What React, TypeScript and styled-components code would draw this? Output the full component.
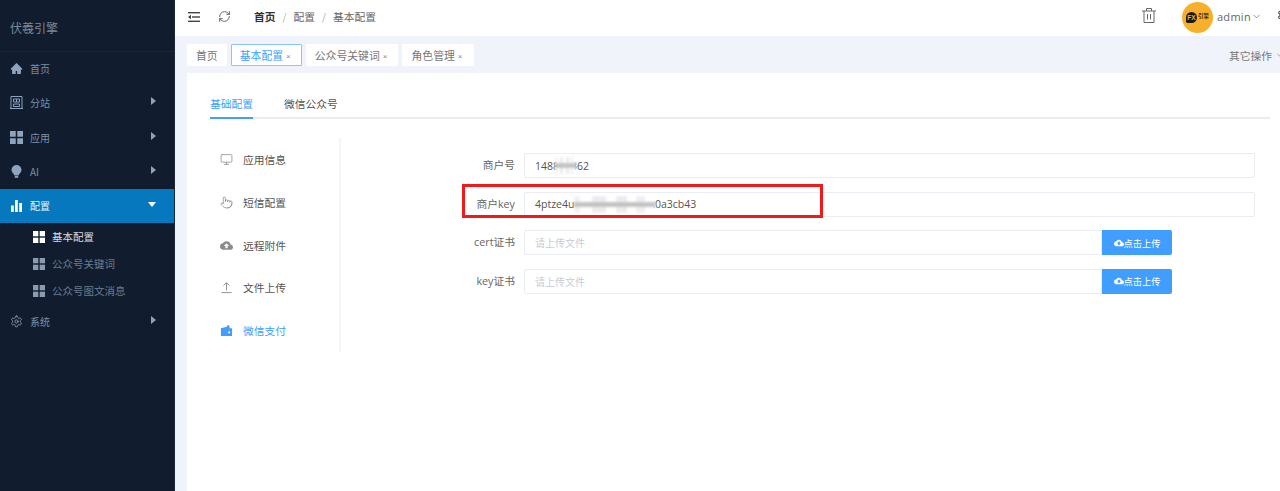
import React from "react";
import styled, { createGlobalStyle } from "styled-components";
import { AiFillHome } from "react-icons/ai";
import { MdCloudUpload } from "react-icons/md";
import { LuMonitor, LuChevronDown, LuSettings, LuRefreshCw, LuPointer } from "react-icons/lu";

const Global = createGlobalStyle`
  html, body { margin: 0; padding: 0; height: 491px; overflow: hidden; background: #fff; }
  body { font-family: "Noto Sans CJK SC", "Noto Sans", sans-serif; }
  * { box-sizing: border-box; }
`;

const Page = styled.div`display: flex; width: 1280px; height: 491px; overflow: hidden;`;
const Sidebar = styled.aside`width: 175px; flex: none; background: #111d2e; border-right: 1px solid #1a2738; color: #8296ad;`;
const Brand = styled.div`height: 52px; display: flex; align-items: center; padding: 3px 0 0 10px; font-size: 12px; color: #7a8a9c; border-bottom: 1px solid #1a2738;`;
const NavItem = styled.div<{ $active?: boolean }>`
  height: 34.3px; display: flex; align-items: center; padding: 0 0 1px 10px; gap: 7px; font-size: 10px; position: relative;
  background: ${p => (p.$active ? "#0678be" : "transparent")};
  color: ${p => (p.$active ? "#e6f3fb" : "#7f90a4")};
  svg.lead { width: 13px; height: 13px; flex: none; color: ${p => (p.$active ? "#fff" : "#8ea3bd")}; }
`;
const Caret = styled.i<{ $open?: boolean }>`
  position: absolute; right: 18px; top: 50%; width: 0; height: 0; display: block;
  ${p => p.$open
    ? "margin-top:-4px;border-left:4px solid transparent;border-right:4px solid transparent;border-top:5px solid #fff;"
    : "margin-top:-6px;border-top:4px solid transparent;border-bottom:4px solid transparent;border-left:5px solid #8ea3bd;"}
`;
const SubItem = styled.div<{ $active?: boolean }>`
  height: 27px; display: flex; align-items: center; padding-left: 33px; gap: 7px; font-size: 10.5px;
  color: ${p => (p.$active ? "#d6dde5" : "#6b7c90")};
  svg { width: 12px; height: 12px; color: ${p => (p.$active ? "#fff" : "#8a9bb0")}; }
`;
const Main = styled.main`flex: 1; min-width: 0; display: flex; flex-direction: column; background: #f0f4fa;`;
const Topbar = styled.header`height: 36px; flex: none; background: #fff; display: flex; align-items: center; padding-left: 13px; width: 1105px;`;
const IconBtn = styled.span<{ $gap?: number }>`display: flex; width: 13px; margin: -3px 0 0 ${p => p.$gap ?? 0}px; color: #555; svg { display: block; }`;
const Crumbs = styled.nav`display: flex; align-items: center; margin: -3px 0 0 23px; font-size: 10.75px; color: #666; gap: 7px;`;
const CrumbStrong = styled.b`color: #303133; font-weight: 700;`;
const Sep = styled.span`color: #aaa; font-size: 10px;`;
const TopRight = styled.div`margin: -3px 0 0 auto; display: flex; align-items: center; color: #666;`;
const TrashSlot = styled.span`display: flex; margin-top: -2px;`;
const Avatar = styled.div`width: 31px; height: 31px; border-radius: 50%; background: #f8b02c; margin: 1px 4px 0 26px; display: flex; align-items: center; justify-content: center; gap: 1px;`;
const FxMark = styled.span`width: 11px; height: 11px; border-radius: 50% 50% 50% 15%; background: #1a1a1a; color: #e8b040; font: 700 6.5px/11px "Liberation Sans", sans-serif; text-align: center;`;
const FxText = styled.span`font-size: 5.5px; line-height: 1; color: #3a2a10; font-weight: 700;`;
const UserName = styled.span`font: 11px "Open Sans", sans-serif; letter-spacing: 0.3px; color: #666;`;
const GearSlot = styled.span`display: flex; margin: -4px -11px 0 15px; color: #555;`;
const TabsBar = styled.div`height: 37px; flex: none; padding: 8px 0 0 12px; display: flex; align-items: flex-start; gap: 4px; position: relative; width: 1105px;`;
const PageTab = styled.div<{ $active?: boolean }>`
  height: 22px; padding: 0 8px; display: flex; align-items: center; gap: 3px; font-size: 10.85px; background: #fff;
  border: 1px solid ${p => (p.$active ? "#8cc4fb" : "#fff")}; border-radius: 1px;
  color: ${p => (p.$active ? "#409eff" : "#777")};
  white-space: nowrap;
`;
const TabClose = styled.span`font: 8px "Liberation Sans", sans-serif; color: #888; margin: 2px 2px 0 0;`;
const OtherOps = styled.div`position: absolute; right: -6px; top: 12px; display: flex; align-items: center; gap: 3px; font-size: 10.75px; color: #777;`;
const Content = styled.section`flex: 1; margin-left: 12px; background: #fff; padding: 0 10px 0 23px; width: 1093px; min-height: 0;`;
const SubTabs = styled.div`height: 46px; display: flex; gap: 31px; border-bottom: 2px solid #e8edf4; font-size: 10.75px; align-items: flex-end;`;
const SubTab = styled.div<{ $active?: boolean }>`
  height: 31px; margin-bottom: -2px; padding-top: 8px; line-height: 16px; border-bottom: 2px solid ${p => (p.$active ? "#409eff" : "transparent")};
  color: ${p => (p.$active ? "#409eff" : "#555")};
`;
const Body = styled.div`display: flex; margin-top: 19px;`;
const SideMenu = styled.ul`list-style: none; margin: 0; padding: 0.5px 0 0 10px; width: 131px; height: 214px; border-right: 2px solid #f5f6f8; display: flex; flex-direction: column;`;
const SideItem = styled.li<{ $active?: boolean }>`
  height: 42.8px; display: flex; align-items: center; gap: 10px; font-size: 10.75px;
  color: ${p => (p.$active ? "#409eff" : "#555")};
  svg { width: 13px; height: 13px; flex: none; color: ${p => (p.$active ? "#409eff" : "#8a8a8a")}; }
`;
const Form = styled.div`flex: 1; padding: 15px 15px 0 0; display: flex; flex-direction: column; gap: 13.67px;`;
const Row = styled.div`display: flex; align-items: stretch; height: 25px; position: relative;`;
const Label = styled.label`width: 183px; flex: none; padding-right: 9px; text-align: right; font: 10.75px/24px "Open Sans", "Noto Sans CJK SC", sans-serif; color: #666;`;
const Field = styled.div<{ $joined?: boolean }>`
  flex: 1; border: 1px solid #e9ecf2; border-radius: ${p => (p.$joined ? "2px 0 0 2px" : "2px")};
  padding-left: 10px; display: flex; align-items: center; font: 10.5px "Open Sans", "Liberation Sans", sans-serif; color: #555; background: #fff;
`;
const Placeholder = styled.span`font-family: "Noto Sans CJK SC", sans-serif; font-size: 10px; color: #c8ccd4;`;
const Mosaic = styled.span<{ $w: number; $before: number; $after: number }>`
  display: inline-block; position: relative; width: ${p => p.$w}px; height: 17px; flex: none;
  margin: 0 ${p => p.$after}px 0 ${p => p.$before}px;
  background:
    linear-gradient(#0000 6px, #c4c4c4 6px, #c4c4c4 11px, #0000 11px),
    linear-gradient(90deg, #f1f1f1 0 8%, #fff 8% 22%, #ececec 22% 40%, #fff 40% 52%, #ececec 52% 66%, #fff 66% 76%, #efefef 76% 88%, #fff 88%);
  filter: blur(1px);
`;
const UploadBtn = styled.button`
  width: 70px; flex: none; border: 0; border-radius: 0 2px 2px 0; background: #409eff; color: #fff; font: 9.25px "Noto Sans CJK SC", sans-serif;
  display: flex; align-items: center; justify-content: center; gap: 0; padding: 0;
`;
const RedBox = styled.div`position: absolute; left: 121px; top: -8px; width: 361px; height: 34px; border: 3px solid #f01a1a; pointer-events: none;`;
const ButtonGutter = styled.div`width: 83px; flex: none;`;

const Building = () => (
  <svg className="lead" viewBox="0 0 13 13" fill="none" stroke="currentColor" strokeWidth="1">
    <path d="M0 12.5h13M1 .5h11v12H1zM3.5 3h6v3h-6zM6.5 3v3M3.5 8h6v2.5h-6z" />
  </svg>
);
const Grid = ({ className }: { className?: string }) => (
  <svg className={className} viewBox="0 0 12 12" fill="currentColor">
    <rect width="5.3" height="5.3" /><rect x="6.7" width="5.3" height="5.3" /><rect y="6.7" width="5.3" height="5.3" /><rect x="6.7" y="6.7" width="5.3" height="5.3" />
  </svg>
);
const Bulb = () => (
  <svg className="lead" viewBox="0 0 13 13" fill="currentColor">
    <path d="M6.5 0A5 5 0 0 1 11.5 5C11.5 7.5 9 8.6 8.5 10.5h-4C4 8.6 1.5 7.5 1.5 5A5 5 0 0 1 6.5 0z" /><rect x="4.7" y="11" width="3.6" height="1.8" rx=".6" />
  </svg>
);
const Bars = () => (
  <svg className="lead" viewBox="0 0 13 13" fill="currentColor">
    <rect x="1" y="6.5" width="2.8" height="6.5" /><rect x="5" y="1" width="2.8" height="12" /><rect x="9.2" y="4" width="2.8" height="9" />
  </svg>
);
const FoldIcon = () => (
  <svg width="12" height="10" viewBox="0 0 12 10" fill="#444">
    <rect width="12" height="1.4" /><rect x="4" y="4.3" width="8" height="1.4" /><rect y="8.6" width="12" height="1.4" /><path d="M3 2.8v4.4L0 5z" />
  </svg>
);
const Trash = () => (
  <svg width="14" height="15" viewBox="0 0 14 15" fill="none" stroke="#666" strokeWidth="1">
    <path d="M0 3h14M2 3v11.5h10V3M4.5 3V.5h5V3M5.5 6v5.5M8.5 6v5.500" />
  </svg>
);
const UploadLine = () => (
  <svg viewBox="0 0 14 14" fill="none" stroke="currentColor" strokeWidth="1"><path d="M7 10V2M3.8 5L7 1.8 10.2 5M1.5 12.5h11" /></svg>
);
const Wallet = () => (
  <svg viewBox="0 0 14 14" fill="currentColor"><path d="M1 4.5 7.5 3 8 1l2 .7.5 2.8H13v8.5H1z" /><circle cx="9.8" cy="9" r="1.1" fill="#fff" /></svg>
);
const Chevron = () => <LuChevronDown size={11} strokeWidth={1.5} />;

export default function App() {
  return (
    <Page>
      <Global />
      <Sidebar>
        <Brand>伏羲引擎</Brand>
        <NavItem><AiFillHome className="lead" />首页</NavItem>
        <NavItem><Building />分站<Caret /></NavItem>
        <NavItem><Grid className="lead" />应用<Caret /></NavItem>
        <NavItem><Bulb />AI<Caret /></NavItem>
        <NavItem $active><Bars />配置<Caret $open /></NavItem>
        <SubItem $active><Grid />基本配置</SubItem>
        <SubItem><Grid />公众号关键词</SubItem>
        <SubItem><Grid />公众号图文消息</SubItem>
        <NavItem><LuSettings className="lead" strokeWidth={1.6} />系统<Caret /></NavItem>
      </Sidebar>
      <Main>
        <Topbar>
          <IconBtn><FoldIcon /></IconBtn>
          <IconBtn $gap={17}><LuRefreshCw size={13} strokeWidth={1.6} /></IconBtn>
          <Crumbs>
            <CrumbStrong>首页</CrumbStrong><Sep>/</Sep><span>配置</span><Sep>/</Sep><span>基本配置</span>
          </Crumbs>
          <TopRight>
            <TrashSlot><Trash /></TrashSlot>
            <Avatar><FxMark>FX</FxMark><FxText>引擎</FxText></Avatar>
            <UserName>admin</UserName><Chevron />
            <GearSlot><LuSettings size={14} /></GearSlot>
          </TopRight>
        </Topbar>
        <TabsBar>
          <PageTab>首页</PageTab>
          <PageTab $active>基本配置<TabClose>×</TabClose></PageTab>
          <PageTab>公众号关键词<TabClose>×</TabClose></PageTab>
          <PageTab>角色管理<TabClose>×</TabClose></PageTab>
          <OtherOps>其它操作<Chevron /></OtherOps>
        </TabsBar>
        <Content>
          <SubTabs>
            <SubTab $active>基础配置</SubTab>
            <SubTab>微信公众号</SubTab>
          </SubTabs>
          <Body>
            <SideMenu>
              <SideItem><LuMonitor strokeWidth={1.4} />应用信息</SideItem>
              <SideItem><LuPointer strokeWidth={1.4} />短信配置</SideItem>
              <SideItem><MdCloudUpload />远程附件</SideItem>
              <SideItem><UploadLine />文件上传</SideItem>
              <SideItem $active><Wallet />微信支付</SideItem>
            </SideMenu>
            <Form>
              <Row>
                <Label>商户号</Label>
                <Field>1488<Mosaic $w={21} $before={-4} $after={-5} />362</Field>
              </Row>
              <Row>
                <Label>商户key</Label>
                <Field>4ptze4u<Mosaic $w={81} $before={0} $after={-6} />k0a3cb43</Field>
                <RedBox />
              </Row>
              <Row>
                <Label>cert证书</Label>
                <Field $joined><Placeholder>请上传文件</Placeholder></Field>
                <UploadBtn><MdCloudUpload size={10} />点击上传</UploadBtn>
                <ButtonGutter />
              </Row>
              <Row>
                <Label>key证书</Label>
                <Field $joined><Placeholder>请上传文件</Placeholder></Field>
                <UploadBtn><MdCloudUpload size={10} />点击上传</UploadBtn>
                <ButtonGutter />
              </Row>
            </Form>
          </Body>
        </Content>
      </Main>
    </Page>
  );
}
